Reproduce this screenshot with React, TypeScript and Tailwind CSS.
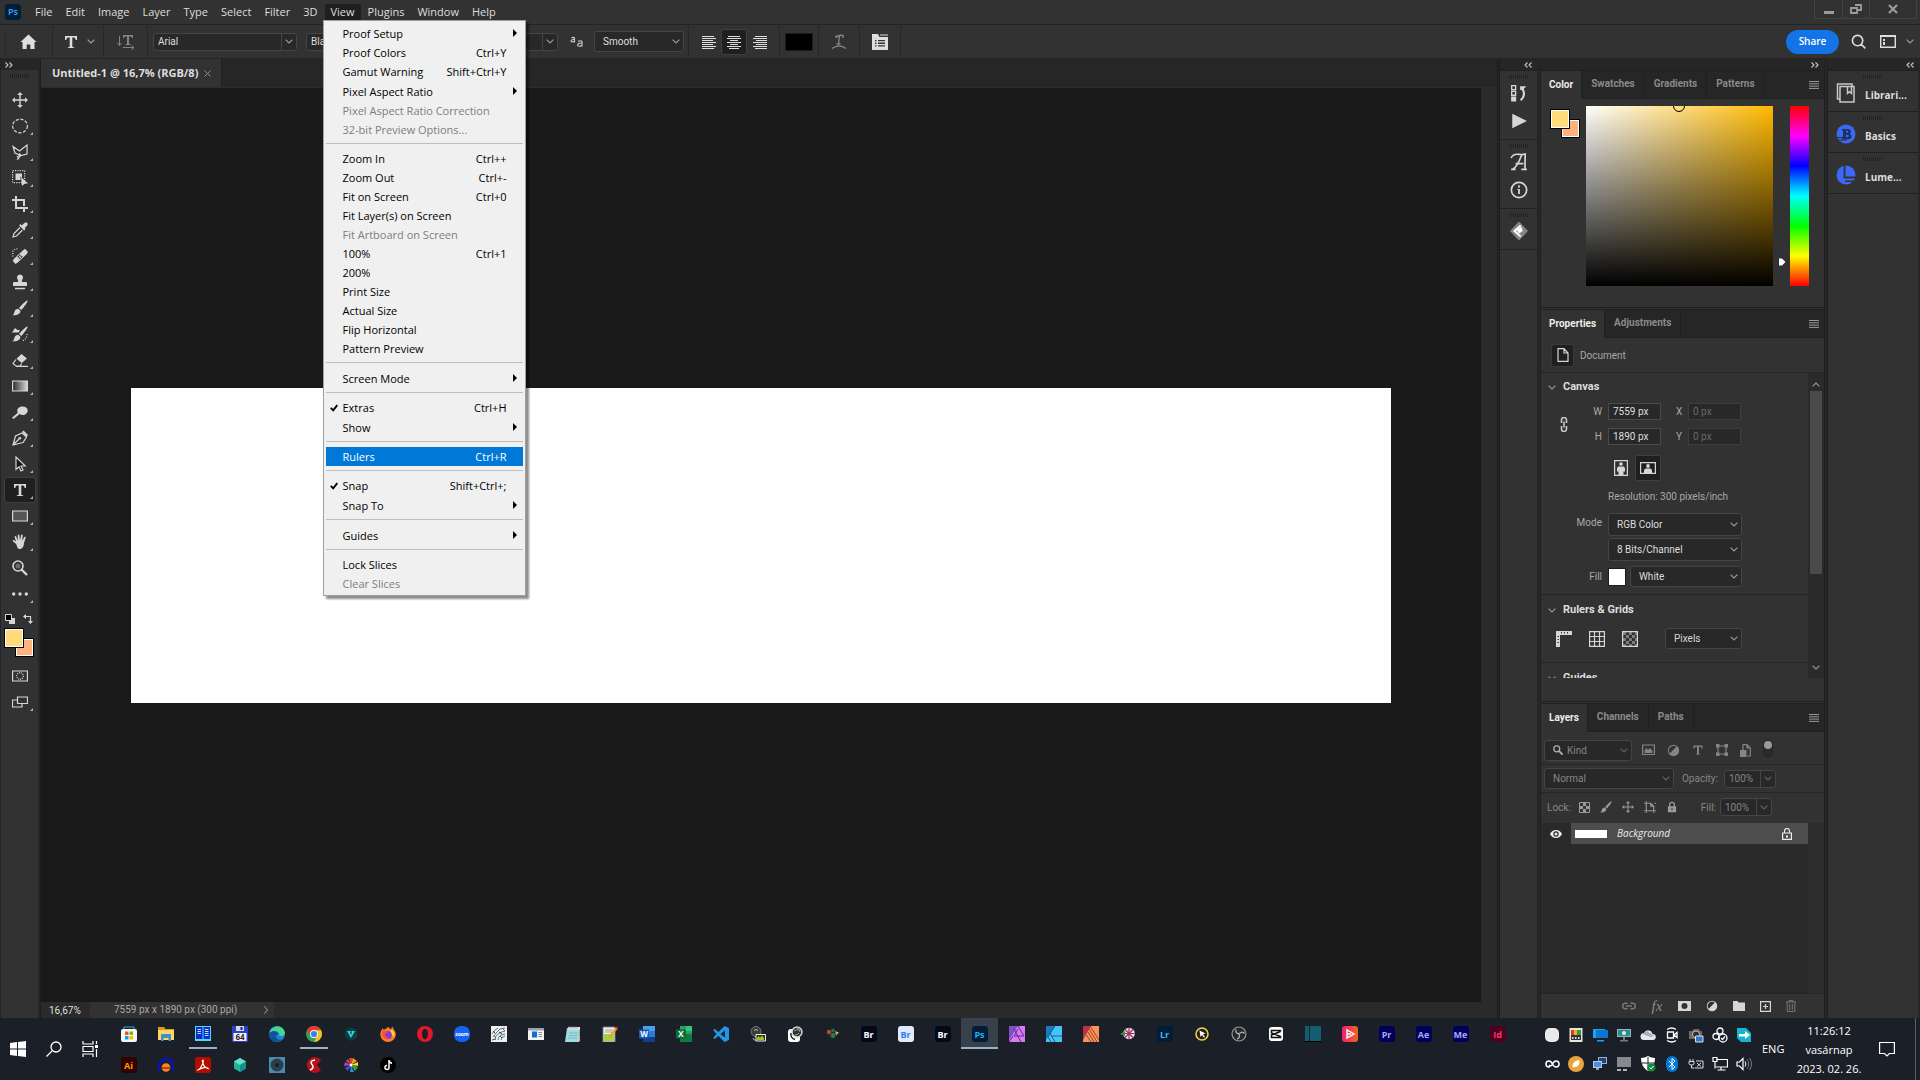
import { ReactNode } from 'react'

type MenuItem = { label: string; keys?: string; sub?: boolean; disabled?: boolean; checked?: boolean; active?: boolean }

const menus = ['File', 'Edit', 'Image', 'Layer', 'Type', 'Select', 'Filter', '3D', 'View', 'Plugins', 'Window', 'Help']

const viewMenu: MenuItem[][] = [
  [
    { label: 'Proof Setup', sub: true },
    { label: 'Proof Colors', keys: 'Ctrl+Y' },
    { label: 'Gamut Warning', keys: 'Shift+Ctrl+Y' },
    { label: 'Pixel Aspect Ratio', sub: true },
    { label: 'Pixel Aspect Ratio Correction', disabled: true },
    { label: '32-bit Preview Options...', disabled: true },
  ],
  [
    { label: 'Zoom In', keys: 'Ctrl++' },
    { label: 'Zoom Out', keys: 'Ctrl+-' },
    { label: 'Fit on Screen', keys: 'Ctrl+0' },
    { label: 'Fit Layer(s) on Screen' },
    { label: 'Fit Artboard on Screen', disabled: true },
    { label: '100%', keys: 'Ctrl+1' },
    { label: '200%' },
    { label: 'Print Size' },
    { label: 'Actual Size' },
    { label: 'Flip Horizontal' },
    { label: 'Pattern Preview' },
  ],
  [{ label: 'Screen Mode', sub: true }],
  [{ label: 'Extras', keys: 'Ctrl+H', checked: true }, { label: 'Show', sub: true }],
  [{ label: 'Rulers', keys: 'Ctrl+R', active: true }],
  [{ label: 'Snap', keys: 'Shift+Ctrl+;', checked: true }, { label: 'Snap To', sub: true }],
  [{ label: 'Guides', sub: true }],
  [{ label: 'Lock Slices' }, { label: 'Clear Slices', disabled: true }],
]

function Svg({ children, className = 'size-4', box = '0 0 16 16' }: { children: ReactNode; className?: string; box?: string }) {
  return (
    <svg viewBox={box} className={`block shrink-0 ${className}`} fill="currentColor" aria-hidden="true">
      {children}
    </svg>
  )
}

function Chevron({ className = 'opacity-65' }: { className?: string }) {
  return (
    <Svg className={`pointer-events-none h-[5px] w-2 ${className}`} box="0 0 8 5">
      <path d="M.6.6 4 4 7.4.6" fill="none" stroke="currentColor" strokeWidth="1.1" />
    </Svg>
  )
}

function DoubleChevron({ left = false, label }: { left?: boolean; label: string }) {
  return (
    <button aria-label={label} className="text-[#c4c4c4]">
      <Svg className="h-[6px] w-2" box="0 0 8 6">
        <path d={left ? 'M3.5.5 1 3l2.5 2.5M7.5.5 5 3l2.5 2.5' : 'M.5.5 3 3 .5 5.5M4.5.5 7 3 4.5 5.5'} fill="none" stroke="currentColor" strokeWidth="1.1" />
      </Svg>
    </button>
  )
}

function Grip() {
  return <div className="h-1 w-5 bg-[repeating-linear-gradient(90deg,#232323_0_1px,transparent_1px_2px)]" />
}

function Divider() {
  return <div className="h-8 w-px shrink-0 bg-[#272727]" />
}

function Picker({ label, value, className = '', icon }: { label: string; value: string; className?: string; icon?: ReactNode }) {
  return (
    <div className={`flex shrink-0 items-center rounded-[3px] border border-[#454545] bg-[#282828] pl-2 pr-[3px] ${className}`}>
      {icon}
      <select aria-label={label} className="min-w-0 flex-1 appearance-none bg-transparent outline-none">
        <option>{value}</option>
      </select>
      <Chevron />
    </div>
  )
}

function Combo({ label, value, className = '' }: { label: string; value: string; className?: string }) {
  return (
    <div className={`flex h-[18px] shrink-0 rounded-[3px] border border-[#454545] bg-[#282828] ${className}`}>
      <input aria-label={label} defaultValue={value} className="w-0 min-w-0 flex-1 bg-transparent pl-1 outline-none" />
      <button aria-label={`${label} options`} className="flex w-[15px] items-center justify-center border-l border-[#454545]">
        <Chevron />
      </button>
    </div>
  )
}

function ViewMenu() {
  return (
    <div role="menu" className="absolute -left-0.5 top-full z-20 w-[203px] border border-[#a0a0a0] bg-[#f0f0f0] p-0.5 text-[11px] text-black shadow-[3px_3px_2px_rgba(0,0,0,0.45)]">
      {viewMenu.map((group, i) => (
        <div key={i} className={i > 0 ? 'mt-1 border-t border-[#bdbdbd] pt-[5px]' : ''}>
          {group.map(item => (
            <button
              key={item.label}
              role="menuitem"
              disabled={item.disabled}
              className={`flex w-full items-center leading-[19px] ${item.sub ? 'h-5' : 'h-[19px]'} ${item.active ? 'bg-[#0078d7] text-white' : ''} ${item.disabled ? 'text-[#7d7d7d]' : ''}`}
            >
              <span className="flex w-[17px] shrink-0 justify-center">
                {item.checked && (
                  <Svg className="h-2 w-2" box="0 0 8 8">
                    <path d="M.8 3.8 3.2 6.3 7.3 1.2" fill="none" stroke="currentColor" strokeWidth="1.900" />
                  </Svg>
                )}
              </span>
              <span className="flex-1 whitespace-nowrap text-left">{item.label}</span>
              <span>{item.keys}</span>
              <span className="flex w-4 shrink-0 justify-center">
                {item.sub && (
                  <Svg className="h-2 w-1" box="0 0 4 8">
                    <path d="M0 0v8l4-4z" />
                  </Svg>
                )}
              </span>
            </button>
          ))}
        </div>
      ))}
    </div>
  )
}

function MenuBar() {
  return (
    <header className="flex h-[25px] items-start border-b border-[#242424] bg-[#323232]">
      <div className="flex h-6 items-center gap-px pl-[5px]">
        <span className="mr-[7px] flex size-4 items-center justify-center rounded-[3px] bg-[#001e36] text-[9px] font-semibold text-[#31a8ff]">Ps</span>
        {menus.map(name => (
          <div key={name} className="relative">
            <button className={`block h-4 rounded-t-[2px] px-1.5 text-[11px] leading-4 ${name === 'View' ? 'bg-[#1f1f1f]' : ''}`}>{name}</button>
            {name === 'View' && <ViewMenu />}
          </div>
        ))}
      </div>
      <div className="ml-auto mr-[3px] flex h-[19px] divide-x divide-[#424242] border border-t-0 border-[#424242] text-[#9c9c9c]">
        <button aria-label="Minimize" className="flex w-7 items-center justify-center pt-1.5">
          <span className="h-[3px] w-2.5 bg-current" />
        </button>
        <button aria-label="Restore" className="flex w-[27px] items-center justify-center">
          <Svg className="h-2.5 w-3" box="0 0 12 10">
            <path d="M5 1h6v5H8M1 4h6v5H1z" fill="none" stroke="currentColor" strokeWidth="1.8" />
          </Svg>
        </button>
        <button aria-label="Close" className="flex w-[46px] items-center justify-center">
          <Svg className="size-2.5" box="0 0 10 10">
            <path d="m1 1 8 8M9 1 1 9" stroke="currentColor" strokeWidth="2.2" />
          </Svg>
        </button>
      </div>
    </header>
  )
}

const letterT = <path d="M2 2h12v4h-1.300c-.3-1.700-.8-2.400-2-2.400H9.300v8.700c0 .7.3.9 1.900 1V14H4.800v-.7c1.600-.1 1.900-.3 1.900-1V3.600H5.300c-1.200 0-1.700.7-2 2.400H2z" />

function AlignIcon({ d }: { d: string }) {
  return (
    <Svg className="size-3.5" box="0 0 14 14">
      <path d={d} stroke="currentColor" />
    </Svg>
  )
}

function OptionsBar() {
  return (
    <div className="flex h-[34px] items-center border-b border-[#242424] bg-[#323232] font-[Roboto,sans-serif] text-[10px] text-[#dedede]">
      <div className="ml-[5px] h-7 w-px bg-[repeating-linear-gradient(#232323_0_1px,transparent_1px_2px)]" />
      <button aria-label="Home" className="ml-3.5">
        <Svg className="h-4 w-[17px]"><path d="M8 .5 16 8h-2v7H9.800v-4.500H6.200V15H2V8H0z" /></Svg>
      </button>
      <div className="ml-[15px]"><Divider /></div>
      <button aria-label="Type tool" className="ml-2.5 flex items-center gap-2">
        <Svg>{letterT}</Svg>
        <Chevron />
      </button>
      <div className="ml-2"><Divider /></div>
      <button aria-label="Toggle text orientation" className="ml-[13px] mr-3 text-[#858585]">
        <Svg className="h-4 w-[18px]" box="0 0 18 16">
          <path d="M6 1h10v3h-1c-.2-1-.6-1.500-1.500-1.500H12v7.500h1.500v1h-5V10H10V2.500H8.500C7.600 2.500 7.200 3 7 4H6z" />
          <path d="M2.500 2v9M.5 9l2 2.500L4.500 9M6 13.500h10.500M14.500 11.500l2.500 2-2.500 2" fill="none" stroke="currentColor" />
        </Svg>
      </button>
      <Divider />
      <Combo label="Font family" value="Arial" className="ml-[5px] w-36" />
      <Combo label="Font style" value="Black" className="ml-[9px] w-28" />
      <Combo label="Font size" value="72 pt" className="ml-8 w-[108px]" />
      <Svg className="ml-3 h-3.5 w-3.5 text-[#cfcfcf]" box="0 0 14 14">
        <path d="M1.500 3q1.500-1.200 3 0v4.500M4.500 4.500q-3-.3-3.500 1.300.3 2 3.500.5M8 6.500q2.200-1.500 4 0v5M12 8q-4-.3-4.500 2 .5 2.300 4.500.5" fill="none" stroke="currentColor" strokeWidth="1.1" />
      </Svg>
      <Picker label="Anti-aliasing" value="Smooth" className="ml-2.5 mr-1 h-[21px] w-[90px]" />
      <Divider />
      <button aria-label="Left align text" className="ml-[13px] mr-[5px]"><AlignIcon d="M0 1.500h12M0 3.500h14M0 5.500h11M0 7.500h14M0 9.500h11M0 11.500h14M0 13.500h12" /></button>
      <button aria-label="Center text" className="flex h-[26px] w-[26px] items-center justify-center rounded-[3px] border border-[#3f3f3f] bg-[#1f1f1f]">
        <AlignIcon d="M1 1.500h12M0 3.500h14M3 5.500h8M0 7.500h14M3 9.500h8M0 11.500h14M2 13.500h10" />
      </button>
      <button aria-label="Right align text" className="ml-1.5 mr-3"><AlignIcon d="M2 1.500h12M0 3.500h14M3 5.500h11M0 7.500h14M3 9.500h11M0 11.500h14M2 13.500h12" /></button>
      <Divider />
      <button aria-label="Text color" className="mx-[5px] h-[18px] w-7 border border-[#1c1c1c] bg-black" />
      <Divider />
      <button aria-label="Warp text" className="mx-3 text-[#858585]">
        <Svg>
          <path d="M5 3.500Q8 .5 12 1.500V4M8.500 1.500l-1 8.500M5.500 10h4M5 1.500V4M1 14.500q7-5 14 0" fill="none" stroke="currentColor" strokeWidth="1.3" />
        </Svg>
      </button>
      <Divider />
      <button aria-label="Toggle character panel" className="mx-3">
        <Svg>
          <path fillRule="evenodd" d="M0 0h6l1.500 3H16v13H0zm3 6v1.300h1.500V6zm3 0v1.300h7V6zM3 8.600v1.300h1.500V8.600zm3 0v1.300h7V8.600zM3 11.200v1.300h1.500v-1.300zm3 0v1.300h7v-1.300z" />
          <path d="M8 0h8v2H8z" opacity=".5" />
        </Svg>
      </button>
      <Divider />
      <button className="ml-auto h-6 w-[53px] rounded-full bg-[#1473e6] font-['Open_Sans',sans-serif] font-semibold text-white">Share</button>
      <button aria-label="Search" className="ml-3">
        <Svg className="size-[15px]"><path d="m10.500 10.500 4.800 4.800M12.500 7A5.500 5.500 0 1 1 1.500 7a5.500 5.500 0 0 1 11 0z" fill="none" stroke="currentColor" strokeWidth="1.7" /></Svg>
      </button>
      <button aria-label="Workspace" className="ml-3.5 mr-1.5 flex items-center">
        <Svg className="h-[13px] w-4" box="0 0 16 13">
          <path d="M.7.7h14.600v11.600H.7z" fill="none" stroke="currentColor" strokeWidth="1.4" />
          <path d="M.7 0h14.600v2H.7zM3 4h2v2H3zm0 3h2v3H3z" />
        </Svg>
        <Chevron className="ml-2.5 opacity-65" />
      </button>
    </div>
  )
}

const line = { fill: 'none', stroke: 'currentColor', strokeWidth: 1.2 }
const moveIcon = <path d="M8 0l2.800 3H8.700v4.300H13V5.200L16 8l-3 2.800V8.700H8.700V13h2.100L8 16l-2.800-3h2.100V8.700H3v2.100L0 8l3-2.800v2.100h4.300V3H5.200z" />
const brushIcon = <path d="M15.500.5c.8.7-3.500 6.800-6.300 9.500L7 8C9.300 5 14.700-.2 15.500.5zM6.200 8.700l2.200 2.100c.2 3-3 5-8.200 4.400 2.200-1 1.700-2.200 2.500-4.200.7-1.500 2.200-2.300 3.500-2.300z" />

const tools: [string, ReactNode][] = [
  ['Move', moveIcon],
  ['Elliptical Marquee', <ellipse cx="8" cy="8" rx="7.4" ry="6.8" {...line} strokeDasharray="3.2 1.6" />],
  ['Polygonal Lasso', <path d="M1 2.500 7.500 7 15 1v9l-6 1.500L3 9zM7 9.500a1.800 1.800 0 1 1-2 2.500M7 11q1 3-2 4.500" {...line} />],
  ['Object Selection', <><path d="M.6.6h12v12h-12z" {...line} strokeDasharray="1.2 1.2" /><path d="M3.500 3.500h6.500v4L8.500 6.500V10h-5zM9 7l7 6.500-3.500.3L10 16z" /></>],
  ['Crop', <path d="M4 0v12h12M0 4h3M5 4h7v6M12 13v3" fill="none" stroke="currentColor" strokeWidth="2" />],
  ['Eyedropper', <><path d="M10 3.500c2-3 4-3.500 5.200-2.600 1 1 .3 3-2.500 5.200l.8 1-1.300 1.300-5-5L8.500 2z" /><path d="M8 5.500 2 11.500 1 15l3.500-1 6-6" {...line} /></>],
  ['Spot Healing', <><path fillRule="evenodd" d="M11 2.200 13 .8 16 4l-1.200 2-9 8.500L3.500 16 .8 13l1-2zM8.300 5.800 5.300 8.700l2.500 2.600 3-2.900z" /><path d="M6.300 7.300 9 10M7.800 6l2.500 2.500M9.500 7l-3 3" stroke="currentColor" /><path d="M.8 8.500V3.500q2.500-4 6-2" {...line} strokeDasharray="1 1.4" /></>],
  ['Clone Stamp', <path d="M8 .5a3 3 0 0 1 2.500 4.700C9.500 6.500 9.700 8 10.500 8H14q1 0 1 1v3H1V9q0-1 1-1h3.500C6.300 8 6.500 6.500 5.500 5.200A3 3 0 0 1 8 .5zM3 13.800h10v1.400H3z" />],
  ['Brush', brushIcon],
  ['History Brush', <>{brushIcon}<path d="M0 6.500 3 2l2.500 2H8L6.500 6.500z" /><path d="M15 8q0 5-5 7" {...line} strokeDasharray="1 1.4" /></>],
  ['Eraser', <><path d="M9.500 2 15 6.500 9.800 11 4.500 6.800z" /><path d="M4 7.500 1 11.500 4 14h4L9.800 11.500M4 14.400h12" {...line} /></>],
  ['Gradient', <><defs><linearGradient id="tool-gradient"><stop stopColor="#2a2a2a" /><stop offset="1" stopColor="#d8d8d8" /></linearGradient></defs><path d="M.6 3h14.800v10H.6z" fill="url(#tool-gradient)" stroke="currentColor" strokeWidth="1.2" /></>],
  ['Dodge', <path d="M10.500 2.500c3 0 5.200 1.500 5.200 4s-2.200 4.500-5 4.500c-1.200 0-2.200-.4-3-1L1.500 15 0 13.800l5.800-5C4 5 7 2.500 10.500 2.500z" />],
  ['Pen', <><path d="M1 15 3.500 6 10 3l4.500 4L11 12.500zM1 15l6-6" {...line} /><circle cx="7.8" cy="8.3" r="1.3" /><path d="m10 2 1.500-1.500L16 5l-1.500 2z" /></>],
  ['Path Selection', <path d="M4 1v12.500l3-2.700 2 4.200 2-1-2-4h4.200z" fill="#151515" stroke="currentColor" strokeWidth="1.2" />],
  ['Horizontal Type', letterT],
  ['Rectangle', <path d="M.6 3h14.800v10H.6z" fill="#565656" stroke="currentColor" strokeWidth="1.2" />],
  ['Hand', <path d="M4.200 10 1 7.500c-.8-.8.2-1.800 1.200-1.300L4 7.500 2.700 3.200c-.3-1.300 1.200-1.500 1.600-.4l1.500 3.900L5.700 1.400c0-1.200 1.600-1.200 1.700 0L8 6.500 9 1.300c.3-1.100 1.800-.8 1.700.3l-.5 5.100 1.900-3.400c.6-1 1.900-.3 1.500.7L12 9c-.2 3.500-1.500 6-4.500 6-2 0-2.500-2.500-3.300-5z" />],
  ['Zoom', <><circle cx="6" cy="6" r="5" {...line} strokeWidth="1.6" /><circle cx="6" cy="6" r="2.5" opacity=".35" /><path d="m9.500 9.500 5.500 5.500" stroke="currentColor" strokeWidth="2.4" /></>],
  ['Edit Toolbar', <path d="M0 8a1.700 1.700 0 1 0 3.400 0A1.700 1.700 0 1 0 0 8zm6.300 0a1.700 1.700 0 1 0 3.400 0 1.700 1.700 0 1 0-3.400 0zm6.300 0A1.700 1.700 0 1 0 16 8a1.700 1.700 0 1 0-3.400 0z" />],
]

function Tool({ name, icon, corner = true }: { name: string; icon: ReactNode; corner?: boolean }) {
  return (
    <button
      aria-label={name}
      className={`flex h-[26px] w-8 items-center rounded-[3px] border pl-[7px] ${name === 'Horizontal Type' ? 'border-[#3f3f3f] bg-[#1f1f1f]' : 'border-transparent'}`}
    >
      <Svg>{icon}</Svg>
      {corner && <Svg className="-mb-3.5 ml-0.5 size-[3px] text-[#b0b0b0]" box="0 0 3 3"><path d="M3 0v3H0z" /></Svg>}
    </button>
  )
}

function Swatches({ className = '' }: { className?: string }) {
  return (
    <div className={`grid ${className}`}>
      <button aria-label="Background color" className="col-start-1 row-start-1 ml-[11px] mt-2.5 size-[19px] border border-black bg-[#ffb27c] outline-1 -outline-offset-2 outline-white" />
      <button aria-label="Foreground color" className="z-10 col-start-1 row-start-1 size-5 border border-black bg-[#ffdb7c] outline-1 -outline-offset-2 outline-white" />
    </div>
  )
}

function Toolbar() {
  return (
    <aside className="flex w-[38px] shrink-0 flex-col border-l border-[#232323] bg-[#323232] text-[#d6d6d6]">
      <div className="flex h-[11px] items-center bg-[#262626] pl-1"><DoubleChevron label="Expand tools" /></div>
      <div className="flex justify-center pb-[9px] pt-1"><Grip /></div>
      <div className="flex flex-col pl-[3px]">
        {tools.map(([name, icon]) => (
          <Tool key={name} name={name} icon={icon} corner={name !== 'Move' && name !== 'Zoom'} />
        ))}
      </div>
      <div className="flex items-center gap-2 pb-1 pl-1 pt-[7px]">
        <button aria-label="Default colors">
          <Svg className="size-2.5" box="0 0 10 10"><path d="M4 4h6v6H4z" /><path d="M.5.5h6v6h-6z" fill="#000" stroke="currentColor" /></Svg>
        </button>
        <button aria-label="Switch colors">
          <Svg className="size-2.5" box="0 0 10 10"><path d="M2 2.500h5.500V8" fill="none" stroke="currentColor" strokeWidth="1.2" /><path d="M0 2.500 3 0v5zM7.500 10 5 7h5z" /></Svg>
        </button>
      </div>
      <Swatches className="ml-[3px] w-[30px]" />
      <div className="mt-1.5 pl-[3px]">
        <Tool name="Quick Mask" corner={false} icon={<><path d="M.6 3h14.800v10H.6z" {...line} /><circle cx="8" cy="8" r="3.3" {...line} strokeDasharray="1 1" /></>} />
        <Tool name="Screen Mode" icon={<path d="M5.500 3h10v6.500h-10zM5.500 6h-5v7h9.500V9.500" {...line} />} />
      </div>
    </aside>
  )
}

function DocumentArea() {
  return (
    <main className="flex min-w-0 flex-1 flex-col">
      <div className="flex h-[29px] border-b border-[#2c2c2c] bg-[#262626]">
        <div className="flex w-[181px] items-center border-r border-[#202020] bg-[#323232] pl-[11px] text-[11px] font-bold text-[#dedede]">
          <span className="flex-1 whitespace-nowrap">Untitled-1 @ 16,7% (RGB/8)</span>
          <button aria-label="Close document" className="mr-2.5 text-[#8f8f8f]">
            <Svg className="size-[7px]" box="0 0 7 7"><path d="m.5.5 6 6M6.500.5l-6 6" stroke="currentColor" /></Svg>
          </button>
        </div>
      </div>
      <div className="flex flex-1">
        <div className="flex flex-1 items-center justify-center bg-[#191919]">
          <div className="aspect-[4/1] w-7/8 bg-white" />
        </div>
        <div className="w-4 bg-[#2a2a2a]" />
      </div>
      <div className="flex h-4 bg-[#2a2a2a] font-[Roboto,sans-serif] text-[10px] leading-[18px] text-[#a8a8a8]">
        <span className="w-[49px] pl-2 text-[#dedede]">16,67%</span>
        <span className="flex w-[184px] items-center bg-[#323232] pl-6 pr-1.5">
          <span className="flex-1">7559 px x 1890 px (300 ppi)</span>
          <button aria-label="Status options">
            <Svg className="h-2 w-1" box="0 0 4 8"><path d="M.5.5 3.500 4 .5 7.500" fill="none" stroke="currentColor" /></Svg>
          </button>
        </span>
      </div>
    </main>
  )
}

const adjustIcon = <path fillRule="evenodd" d="M8 1a7 7 0 1 1 0 14A7 7 0 0 1 8 1zM3.500 11.500l8-8A5.700 5.700 0 0 0 3.500 11.500z" />
const lockIcon = <path fillRule="evenodd" d="M4 7V5a4 4 0 0 1 8 0v2h1.500v8h-11V7zm1.700 0h4.600V5a2.300 2.300 0 0 0-4.600 0zM7 10v2h2v-2z" />

function DockButton({ label, children }: { label: string; children: ReactNode }) {
  return <button aria-label={label} className="flex h-7 w-full items-center justify-center"><Svg className="size-[18px]">{children}</Svg></button>
}

function IconDock() {
  return (
    <aside className="flex w-[38px] shrink-0 flex-col border-r border-[#232323] bg-[#323232] text-[#d6d6d6]">
      <div className="flex h-3 items-center justify-end border-b border-[#202020] bg-[#262626] pr-[5px]"><DoubleChevron left label="Expand dock" /></div>
      <div className="flex h-[69px] flex-col items-center border-b border-[#232323] pt-1">
        <Grip />
        <DockButton label="History"><path d="M1.500 1.500h3.500v3.500H1.500zM1.500 6.500h3.500V10H1.500z" {...line} /><path d="M1 11h4.500v4.500H1zM9 2h5.500L11 5.800 9 5z" /><path d="M9.500 14.500Q14.500 10 11 4" {...line} strokeWidth="1.8" /></DockButton>
        <DockButton label="Actions"><path d="M2 1.500 15 8 2 14.500z" /></DockButton>
      </div>
      <div className="flex h-[69px] flex-col items-center border-b border-[#232323] pt-1">
        <Grip />
        <DockButton label="Glyphs"><path d="M1 4.500Q2.500.5 8 1.200q3.500.4 5.500-.2L13.300 14.300M10.500 1.500Q6 13 2.500 14.300M5 9.500h7M1 14.500h4M10 14.500h5" {...line} strokeWidth="1.5" /></DockButton>
        <DockButton label="Info"><circle cx="8" cy="8" r="6.8" {...line} strokeWidth="1.5" /><path d="M7.100 4h1.800v1.700H7.100zM6.500 7h2.300v4.500H7.200V8h-.7z" /></DockButton>
      </div>
      <div className="flex h-[41px] flex-col items-center border-b border-[#232323] pt-1">
        <Grip />
        <DockButton label="Fonts"><path d="m8-.5 8 8.500-8 8.500L0 8z" fill="#858585" /><path d="M9.500 3 4 8l5.500 5M6.500 8l4-3M7.500 9.500 11 7" fill="none" stroke="#fff" strokeWidth="1.8" /></DockButton>
      </div>
    </aside>
  )
}

function PanelTabs({ tabs }: { tabs: string[] }) {
  return (
    <div role="tablist" className="flex h-7 border-b border-[#202020] bg-[#262626]">
      {tabs.map((tab, i) => (
        <button
          key={tab}
          role="tab"
          aria-selected={i === 0}
          className={`border-r border-[#202020] pb-0.5 text-[10px] font-bold ${i === 0 ? '-mb-px bg-[#323232] px-2 text-[#ececec]' : 'px-[9px] text-[#8a8a8a]'}`}
        >
          {tab}
        </button>
      ))}
      <button aria-label="Panel menu" className="ml-auto mr-[5px] text-[#9a9a9a]">
        <Svg className="h-2 w-2.5" box="0 0 10 8"><path d="M0 .5h10M0 2.800h10M0 5.100h10M0 7.400h10" stroke="currentColor" /></Svg>
      </button>
    </div>
  )
}

function ColorPanel() {
  return (
    <section className="h-[237px] border-b border-[#202020]">
      <PanelTabs tabs={['Color', 'Swatches', 'Gradients', 'Patterns']} />
      <div className="flex pl-[9px] pt-[7px]">
        <Swatches className="mr-1.5 mt-[3px] w-[30px] self-start" />
        <div className="relative h-[180px] w-[187px] overflow-hidden bg-[linear-gradient(to_top,#000,transparent),linear-gradient(to_right,#fff,#ffb900)]">
          <span className="absolute -top-1.5 left-[87px] size-3 rounded-full border border-black" />
        </div>
        <div className="flex w-[17px] items-end justify-center pb-5">
          <Svg className="size-2 text-white" box="0 0 8 8"><path d="M1 .5h3L7.500 4 4 7.500H1z" /></Svg>
        </div>
        <div className="h-[180px] w-[19px] bg-[linear-gradient(#f00,#f0f,#00f,#0ff,#0f0,#ff0,#f00)]" />
      </div>
    </section>
  )
}

function SizeField({ label, value, disabled, labelClass }: { label: string; value: string; disabled?: boolean; labelClass: string }) {
  return (
    <label className="flex items-center gap-1.5">
      <span className={`text-right ${labelClass}`}>{label}</span>
      <input
        defaultValue={value}
        disabled={disabled}
        className={`h-[17px] w-[53px] border bg-[#282828] pl-1 outline-none ${disabled ? 'border-[#3d3d3d] text-[#6a6a6a]' : 'border-[#4a4a4a] text-[#dedede]'}`}
      />
    </label>
  )
}

function Heading({ children }: { children: ReactNode }) {
  return (
    <h3 className="flex items-center gap-1.5 pl-1.5 text-[11px] font-bold leading-4 text-[#dedede]">
      <Chevron className="w-2.5 text-[#9a9a9a]" />
      {children}
    </h3>
  )
}

function PropertiesPanel() {
  return (
    <section className="mt-px h-[393px] border-y border-[#202020]">
      <PanelTabs tabs={['Properties', 'Adjustments']} />
      <div className="flex h-[35px] items-center gap-1.5 border-b border-[#262626] pl-2.5">
        <span className="flex size-[23px] items-center justify-center rounded-[3px] border border-[#3a3a3a] bg-[#1f1f1f] text-[#d6d6d6]">
          <Svg className="h-3.5 w-3" box="0 0 12 14"><path d="M1 .7h6L11 5v8.300H1zM7 .7V5h4" {...line} /></Svg>
        </span>
        Document
      </div>
      <div className="flex h-[305px]">
        <div className="min-w-0 flex-1 overflow-hidden">
          <div className="h-[222px] border-b border-[#262626] pt-1.5">
            <Heading>Canvas</Heading>
            <div className="mt-2 flex">
              <button aria-label="Link width and height" className="flex w-[46px] items-center justify-center text-[#c6c6c6]">
                <Svg className="h-[15px] w-2" box="0 0 8 15"><path d="M1.500 6V3a2.500 2.500 0 0 1 5 0v3M1.500 9v3a2.500 2.500 0 0 0 5 0V9M4 4.500v6" fill="none" stroke="currentColor" strokeWidth="1.6" /></Svg>
              </button>
              <div className="grid grid-cols-[auto_auto] gap-x-[15px] gap-y-2">
                <SizeField label="W" value="7559 px" labelClass="w-[15px]" />
                <SizeField label="X" value="0 px" disabled labelClass="w-1.5" />
                <SizeField label="H" value="1890 px" labelClass="w-[15px]" />
                <SizeField label="Y" value="0 px" disabled labelClass="w-1.5" />
              </div>
            </div>
            <div className="ml-[73px] mt-2.5 flex items-center gap-[7px] text-[#d6d6d6]">
              <button aria-label="Portrait"><Svg className="h-4 w-3.5" box="0 0 14 16"><path d="M.6.6h12.800v14.800H.6z" {...line} /><circle cx="7" cy="4" r="1.8" /><path d="M4 6.500h6l1 2v3H9.500V15h-5v-3.500H3v-3z" /></Svg></button>
              <button aria-label="Landscape" className="flex size-[26px] items-center justify-center rounded-[3px] border border-[#3f3f3f] bg-[#1f1f1f]">
                <Svg className="h-3 w-4" box="0 0 16 12"><path d="M.6.6h14.800v10.800H.6z" {...line} /><circle cx="8" cy="4" r="1.9" /><path d="M4 11V8.500Q4 6.500 6 6.500h4q2 0 2 2V11z" /></Svg>
              </button>
            </div>
            <p className="ml-[67px] mt-2 leading-4">Resolution: 300 pixels/inch</p>
            <div className="mt-2 flex">
              <span className="w-[61px] pt-0.5 text-right leading-4">Mode</span>
              <div className="ml-1.5 flex flex-col gap-0.5 text-[#dedede]">
                <Picker label="Mode" value="RGB Color" className="h-[23px] w-[134px]" />
                <Picker label="Bit depth" value="8 Bits/Channel" className="h-[23px] w-[134px]" />
              </div>
            </div>
            <div className="mt-[5px] flex items-center text-[#dedede]">
              <span className="w-[61px] text-right text-[#a8a8a8]">Fill</span>
              <button aria-label="Fill color" className="ml-1.5 mr-1 size-[18px] border border-[#1c1c1c] bg-white" />
              <Picker label="Fill" value="White" className="h-[21px] w-[112px]" />
            </div>
          </div>
          <div className="h-[68px] border-b border-[#262626] pt-[7px]">
            <Heading>Rulers &amp; Grids</Heading>
            <div className="mt-2.5 flex items-center gap-[17px] pl-[15px] text-[#d6d6d6]">
              <button aria-label="Rulers"><Svg><path fillRule="evenodd" d="M0 0h16v4H4v12H0zm5 1v1.500h1V1zm3 0v1.500h1V1zm3 0v1.500h1V1zM1.500 5v1H3V5zm0 3v1H3V8zm0 3v1H3v-1z" /></Svg></button>
              <button aria-label="Grid"><Svg><path d="M.6.6h14.800v14.800H.6zM5.500 0v16M10.500 0v16M0 5.500h16M0 10.500h16" {...line} /></Svg></button>
              <button aria-label="Transparency"><Svg><path d="M.6.6h14.800v14.800H.6z" {...line} /><path d="M1 1h3v3H1zM7 1h3v3H7zM4 4h3v3H4zM10 4h3v3h-3zM1 7h3v3H1zM7 7h3v3H7zM4 10h3v3H4zM10 10h3v3h-3zM13 1h2v3h-2zM13 7h2v3h-2zM1 13h3v2H1zM7 13h3v2H7zM13 13h2v2h-2z" opacity=".45" /></Svg></button>
              <Picker label="Units" value="Pixels" className="ml-2.5 h-[21px] w-[77px]" />
            </div>
          </div>
          <div className="pt-[7px]"><Heading>Guides</Heading></div>
        </div>
        <div className="flex w-4 flex-col items-center bg-[#2a2a2a] pb-2 pt-[9px]">
          <Chevron className="rotate-180 text-[#9a9a9a]" />
          <div className="mt-1 h-[183px] w-3 bg-[#4a4a4a]" />
          <Chevron className="mt-auto text-[#9a9a9a]" />
        </div>
      </div>
    </section>
  )
}

function LayersPanel() {
  return (
    <section className="mt-px flex flex-1 flex-col border-t border-[#202020] text-[#858585]">
      <PanelTabs tabs={['Layers', 'Channels', 'Paths']} />
      <div className="flex h-[33px] items-center border-b border-[#262626] pl-[3px] pt-1">
        <Picker label="Filter type" value="Kind" className="h-[21px] w-[88px]" icon={<Svg className="mr-1 size-2.5 text-[#b0b0b0]"><circle cx="6" cy="6" r="4.8" fill="none" stroke="currentColor" strokeWidth="2" /><path d="m9.500 9.500 6 6" stroke="currentColor" strokeWidth="3" /></Svg>} />
        <div className="flex items-center gap-3 pl-2.5">
          <button aria-label="Pixel layers"><Svg className="h-3 w-[13px]" box="0 0 13 12"><path d="M.6 1h11.800v9.500H.6z" {...line} /><path d="M2.500 9V6.500L4.500 4 6 6l2-2 2.500 3v2z" /></Svg></button>
          <button aria-label="Adjustment layers"><Svg className="size-[13px]">{adjustIcon}</Svg></button>
          <button aria-label="Type layers"><Svg className="size-3">{letterT}</Svg></button>
          <button aria-label="Shape layers"><Svg className="size-3" box="0 0 12 12"><path d="M2 2h8v8H2z" {...line} /><path d="M0 0h3.500v3.500H0zM8.500 0H12v3.500H8.500zM0 8.500h3.500V12H0zM8.500 8.500H12V12H8.500z" /></Svg></button>
          <button aria-label="Smart objects"><Svg className="h-[13px] w-[11px]" box="0 0 11 13"><path d="M3 7V.7h4L10.300 4v8H7M7 .7V4h3.300" {...line} /><path d="M0 6h6.500v7H0z" /></Svg></button>
        </div>
        <button aria-label="Toggle layer filter" className="mb-0.5 ml-3 flex h-[18px] w-2.5 rounded-full border border-[#262626] bg-[#2a2a2a]">
          <span className="size-2 rounded-full bg-[#9a9a9a]" />
        </button>
      </div>
      <div className="flex h-7 items-center border-b border-[#262626] pl-[3px]">
        <Picker label="Blend mode" value="Normal" className="h-[21px] w-[130px]" />
        <span className="w-[44px] text-right">Opacity:</span>
        <Combo label="Opacity" value="100%" className="ml-1.5 w-[52px]" />
      </div>
      <div className="flex h-[30px] items-center pb-0.5 pl-1.5">
        <span className="w-8">Lock:</span>
        <div className="flex items-center gap-2.5 text-[#9a9a9a]">
          <button aria-label="Lock transparent pixels"><Svg className="size-[11px]" box="0 0 11 11"><path d="M.5.5h10v10H.5z" fill="none" stroke="currentColor" /><path d="M4 1h3v3H4zM1 4h3v3H1zM7 4h3v3H7zM4 7h3v3H4z" /></Svg></button>
          <button aria-label="Lock image pixels"><Svg className="size-3">{brushIcon}</Svg></button>
          <button aria-label="Lock position"><Svg className="size-3">{moveIcon}</Svg></button>
          <button aria-label="Lock artboard"><Svg className="size-3">
            <path d="M3 0v2M0 3h2M3 14v2M14 3h2M13 14v2M0 13h2M14 13h2M3 3h6l4 4v6H3zM9 3v4h4" {...line} strokeWidth="1.5" /></Svg></button>
          <button aria-label="Lock all"><Svg className="size-3">{lockIcon}</Svg></button>
        </div>
        <span className="ml-auto mr-1">Fill:</span>
        <Combo label="Fill opacity" value="100%" className="mr-[52px] w-[52px]" />
      </div>
      <div className="flex flex-1 bg-[#2a2a2a]">
        <div className="flex-1">
          <div className="flex h-[21px] items-stretch text-[#ececec]">
            <button aria-label="Toggle layer visibility" className="flex w-[30px] items-center justify-center">
              <Svg className="h-2 w-3" box="0 0 12 8"><path fillRule="evenodd" d="M6 0c3 0 5 2 6 4-1 2-3 4-6 4S1 6 0 4c1-2 3-4 6-4zm0 1.300a2.700 2.700 0 1 0 0 5.400 2.700 2.700 0 0 0 0-5.400z" /><circle cx="6" cy="4" r="1.5" /></Svg>
            </button>
            <div className="flex flex-1 items-center bg-[#4d4d4d] pl-1 pr-4">
              <span className="mr-2.5 h-2 w-8 bg-white" />
              <span className="flex-1 font-['Open_Sans',sans-serif] italic">Background</span>
              <Svg className="h-3 w-2.5" box="0 0 10 12"><path d="M.6 5h8.800v6.400H.6zM2.500 5V3a2.500 2.500 0 0 1 5 0v2" {...line} /><path d="M4 7.500h2v2H4z" /></Svg>
            </div>
          </div>
        </div>
        <div className="w-4 bg-[#2d2d2d]" />
      </div>
      <div className="flex h-[25px] items-center justify-end gap-[15px] border-t border-[#262626] pr-7 text-[#d6d6d6]">
        <button aria-label="Link layers" className="text-[#7a7a7a]"><Svg className="h-2 w-3.5" box="0 0 14 8"><path d="M5.500 6.800H3.500a2.800 2.800 0 0 1 0-5.600h2M8.500 6.800h2a2.800 2.800 0 0 0 0-5.600h-2M4 4h6" {...line} strokeWidth="1.4" /></Svg></button>
        <button aria-label="Layer style" className="w-3 font-['Liberation_Serif',serif] text-[15px] italic leading-none text-[#8a8a8a]">fx</button>
        <button aria-label="Add mask"><Svg className="h-2.5 w-[13px]" box="0 0 13 10"><path fillRule="evenodd" d="M0 0h13v10H0zm6.500 2a3 3 0 1 0 0 6 3 3 0 0 0 0-6z" /></Svg></button>
        <button aria-label="Adjustment layer"><Svg className="size-3">{adjustIcon}</Svg></button>
        <button aria-label="New group"><Svg className="h-2.5 w-3" box="0 0 12 10"><path d="M0 0h4.500l1 1.500H12V10H0z" /></Svg></button>
        <button aria-label="New layer"><Svg className="size-[11px]" box="0 0 11 11"><path d="M.6.6h9.800v9.800H.6zM5.500 3v5M3 5.500h5" {...line} /></Svg></button>
        <button aria-label="Delete layer" className="text-[#7a7a7a]"><Svg className="h-3 w-2.5" box="0 0 10 12"><path d="M0 2h10M3 2V.6h4V2M1.200 2.500v8.900h7.600V2.500M3.700 4v6M6.300 4v6" {...line} strokeWidth="1" /></Svg></button>
      </div>
    </section>
  )
}

function SidePanels() {
  return (
    <aside className="ml-0.5 flex w-[285px] shrink-0 flex-col border-x border-[#202020] bg-[#323232] font-[Roboto,sans-serif] text-[10px] text-[#a8a8a8]">
      <div className="flex h-3 shrink-0 items-center justify-end border-b border-[#202020] bg-[#262626] pr-[5px]"><DoubleChevron label="Collapse panels" /></div>
      <ColorPanel />
      <PropertiesPanel />
      <LayersPanel />
    </aside>
  )
}

const plugins: [string, ReactNode][] = [
  ['Librari...', <path d="M4 3.500h14V19H4zM4 16H1.500V1H16v2.500M11.500 4v6.500l2-1.700 2 1.700V4" fill="none" stroke="#c8c8c8" strokeWidth="1.5" />],
  ['Basics', <><circle cx="10" cy="10" r="9.5" fill="#3b68f5" /><path d="M0 13.500h9M2 16h9" stroke="#323232" strokeWidth="1.2" /><path d="M6 5h6q3 0 3 2.500 0 1.700-1.500 2.300 2 .5 2 2.500 0 3-3.500 3H6v-1.500h1V6.500H6zm4 1.800v2h1.200q1 0 1-1t-1-1zm0 3.900v2.500h1.500q1.200 0 1.200-1.200t-1.200-1.300z" fill="#1f2f66" fillRule="evenodd" /></>],
  ['Lume...', <><circle cx="10" cy="10" r="9.5" fill="#3b68f5" /><path d="M8.500 0v12.500H20" fill="none" stroke="#323232" strokeWidth="1.8" /><path d="M9 15.500h11v1.500H9z" fill="#323232" /></>],
]

function PluginDock() {
  return (
    <aside className="ml-0.5 mr-0.5 flex w-[91px] shrink-0 flex-col border-l border-[#202020] bg-[#323232]">
      <div className="flex h-3 items-center justify-end border-b border-[#202020] bg-[#262626] pr-1"><DoubleChevron left label="Expand plugins" /></div>
      {plugins.map(([name, icon]) => (
        <div key={name} className="flex h-[41px] flex-col items-center border-b border-[#202020] pt-1">
          <Grip />
          <button className="flex w-full flex-1 items-center gap-2 pl-[7px] text-left text-[10px] font-bold text-[#dedede]">
            <Svg className="mb-1 size-[22px]" box="-1 -1 22 22">{icon}</Svg>
            {name}
          </button>
        </div>
      ))}
    </aside>
  )
}

function Badge({ className, children }: { className: string; children: ReactNode }) {
  return <span className={`flex size-4 items-center justify-center rounded-[3px] text-[9px] font-bold leading-none ${className}`}>{children}</span>
}

type App = [string, ReactNode, ('open' | 'active')?]

const pinned: App[] = [
  ['Store', <Svg><rect y="3" width="16" height="13" rx="2" fill="#f6f6f6" /><path d="M3 3V1h10v2" fill="none" stroke="#2fa8dc" /><path d="M4 5.500h3.500V9H4z" fill="#f25022" /><path d="M8.500 5.500H12V9H8.500z" fill="#7fba00" /><path d="M4 10h3.500v3.500H4z" fill="#00a4ef" /><path d="M8.500 10H12v3.500H8.500z" fill="#ffb900" /></Svg>],
  ['File Explorer', <Svg><path d="M0 1h6l1.500 2H16v4H0z" fill="#d9a01c" /><path d="M0 4h16v10H0z" fill="#ffd75e" /><path d="M3 15V8h10v7h-2.500v-3h-5v3z" fill="#3f8fd2" /></Svg>],
  ['Commander', <Svg><path d="M0 0h16v15H0z" fill="#4fd8ff" /><path d="M1 1h6.500v12H1zM8.500 1H15v12H8.500z" fill="#0a2fc9" /><path d="M2.500 3.500H6M2.500 5.500H6M2.500 7.500H6M10 3.500h3.500M10 5.500h3.500M10 7.500h3.500M10 9.500h3.500" stroke="#b5e4ff" /></Svg>, 'open'],
  ['Total Commander 64', <Svg><path d="M0 0h16v16H0z" fill="#2c3fc4" /><path d="M4 0h8v5H4z" fill="#d3dcf3" /><path d="M8.500 1h2v3h-2z" fill="#17237e" /><path d="M1.500 7h13v8h-13z" fill="#f3f3f3" /><text x="8" y="14" fontSize="8" fontWeight="bold" textAnchor="middle" fill="#222">64</text></Svg>],
  ['Edge', <Svg><circle cx="8" cy="8" r="8" fill="#1b86d3" /><path d="M.5 7C2-1 14-2 15.900 6.500c.4 3-3.500 4.500-5.700 3C11 6 6 3 .5 7z" fill="#4bd48b" /><path d="M.2 7C4 3.500 9 5.500 9.500 8.500 7 8 6 10.500 8 12.500c2 2 4.500 1.500 6.500.2C9 19-1 16 .2 7z" fill="#11529b" /></Svg>],
  ['Chrome', <Svg><circle cx="8" cy="8" r="8" fill="#31a350" /><path d="M1 4.200A8 8 0 0 1 15 4.200H8L5 10z" fill="#e33b2e" /><path d="M15 4.200A8 8 0 0 1 8 16l4-7-1.500-4.800z" fill="#fbc116" /><circle cx="8" cy="8" r="4" fill="#fff" /><circle cx="8" cy="8" r="3.1" fill="#3b7ded" /></Svg>, 'open'],
  ['Vivaldi', <Svg><path d="m8 1 6 3.500v7L8 15l-6-3.500v-7z" fill="#0a3f47" /><path d="M4 5h8l-4 7z" fill="#35d3c7" /><path d="M7 5.500h2L8 9z" fill="#0a3f47" /></Svg>],
  ['Firefox', <Svg><path d="M8 1c2 1 2 2 3 2.500.3-1 .5-2 1.500-3C13 3 16 5 15.800 9A7.800 7.800 0 0 1 .3 9C.2 6 1.500 3.500 3 2l.5 2Q6 3 8 1z" fill="#ff7a25" /><path d="M11 3.500c3 1 4.500 4.500 3 7.500L10 7z" fill="#ffd43b" /><circle cx="7.8" cy="9" r="4" fill="#7d3fd2" /><path d="M2 5q4-1 6 1l-3 2q0 3 4 3.500Q4 15 2.500 10z" fill="#ff4a3d" /></Svg>],
  ['Opera', <Svg><circle cx="8" cy="8" r="8" fill="#e5172b" /><ellipse cx="8" cy="8" rx="3" ry="5.2" fill="#1b1f28" /></Svg>],
  ['Zoom', <Svg><rect width="16" height="16" rx="7" fill="#1663f3" /><text x="8" y="10" fontSize="5" fontWeight="bold" textAnchor="middle" fill="#fff">zoom</text></Svg>],
  ['Process Monitor', <Svg><path d="M0 0h16v16H0z" fill="#f0f0f0" /><path d="m1 8 3-4 3-2M2 11l3-4 4-4 5-1M4 13q1-6 10-8M7 14q0-5 7-6M10 14q0-3 4-4" stroke="#22605f" fill="none" strokeWidth=".8" /><path d="m1 14 4-1M2 5l2 2M8 6l3 2M9 10l2 2" stroke="#222" fill="none" strokeWidth=".8" /><path d="m12 3 2 2M3 10l2 1" stroke="#d14b3b" fill="none" /></Svg>],
  ['Remote Viewer', <Svg><path d="M0 2h16v12H0z" fill="#f3f3f3" /><path d="M0 2h16v2.500H0z" fill="#9aa3ab" /><path d="M4 5.500h5v6H4z" fill="#1170cf" /><path d="M10.500 6.500H14M10.500 8.500H14M10.500 10.500H14" stroke="#888" /></Svg>],
  ['Notepad', <Svg><path d="M2 2h13l-1 14H0z" fill="#a2d9e2" /><path d="M3 1h12v2.500H3z" fill="#e6eef0" /><path d="M4 .5v2M6 .5v2M8 .5v2M10 .5v2M12 .5v2" stroke="#889" /><path d="M4 7h9M4 9.500h9M3 12h9" stroke="#4c9aab" strokeWidth=".5" /><path d="M15 3v12l-1.500 1z" fill="#e0b568" /></Svg>],
  ['Notepad++', <Svg><path d="M1 1h12v15H1z" fill="#f4f4e8" stroke="#777" /><path d="M2 8h10v7H2z" fill="#a6d13f" /><path d="M3 4h8M3 6h7" stroke="#999" /><path d="m6 11 8-10 2 1.500-8 9z" fill="#e8a12e" /><path d="m14 1 2 1.500" stroke="#d12" strokeWidth="2" /></Svg>],
  ['Word', <Svg><path d="M4 0h12v16H4z" fill="#2b7cd3" /><path d="M4 0h12v5H4z" fill="#41a5ee" /><path d="M4 11h12v5H4z" fill="#103f91" /><path d="M0 3.500h10v9H0z" fill="#185abd" /><text x="5" y="11" fontSize="8" fontWeight="bold" textAnchor="middle" fill="#fff">W</text></Svg>],
  ['Excel', <Svg><path d="M4 0h12v16H4z" fill="#21a366" /><path d="M10 0h6v5h-6z" fill="#33c481" /><path d="M4 8h12v8H4z" fill="#107c41" /><path d="M0 3.500h10v9H0z" fill="#0e6d39" /><text x="5" y="11" fontSize="8" fontWeight="bold" textAnchor="middle" fill="#fff">X</text></Svg>],
  ['VS Code', <Svg><path fillRule="evenodd" d="m11.500 0 4.500 2v12l-4.500 2-6-6-3.700 3L0 12l3.500-4L0 4l1.800-1 3.700 3zm.5 4.500L7.500 8l4.500 3.500z" fill="#2396e3" /></Svg>],
  ['Camera Monitor', <Svg><circle cx="6" cy="5.5" r="5" fill="#3c3c3c" stroke="#777" /><path d="M4 4.500Q6 2.500 8 4.500M3 12q1 3 3 2" stroke="#bbb" fill="none" /><path d="M6 8.500h9.500V15H6z" fill="#24310f" stroke="#eee" /><path d="M7 14v-2l1.500-2 1.500 1.500L12 9.500l2 2.500v2z" fill="#9ac52a" /></Svg>],
  ['Steam Recorder', <Svg><rect x="1" y="3" width="12" height="13" rx="3" fill="#fff" /><circle cx="10" cy="6" r="5" fill="#2c3533" stroke="#cfd6d6" strokeWidth="1.5" /><path d="M10 2q3 1 3 4M7 5q2-2 5-1M8 9q3 0 4-2" stroke="#8fa8a2" fill="none" /><path d="M4 7q-1 5 4 6.500" stroke="#222" strokeWidth="1.5" fill="none" /></Svg>],
  ['Color Tool', <Svg><path d="m1 7 7-5 7 5-7 7z" fill="#1b2a23" /><circle cx="5" cy="6" r="2.2" fill="#b64a2a" /><circle cx="9" cy="9.500" r="2.4" fill="#2f7d42" /><circle cx="9" cy="4.500" r="1.8" fill="#246b5e" /><path d="m11 5 4 1.500-3 3z" fill="#c8a27c" /></Svg>],
  ['Bridge', <Badge className="bg-[#04081a] text-white">Br</Badge>],
  ['Bridge Beta', <Badge className="bg-[#dfeafc] text-[#2f7bf0]">Br</Badge>],
  ['Bridge 2023', <Badge className="bg-[#04081a] text-white">Br</Badge>],
  ['Photoshop', <Badge className="bg-[#001e36] text-[#31a8ff]">Ps</Badge>, 'active'],
  ['Affinity Photo', <Svg><path d="M0 0h16v16H0z" fill="#d97bf5" /><path d="M0 0h9L0 14z" fill="#7f4fc4" /><path d="m9 0 6 10H5L9 3M5 3l7 13M4 10l-4 6" stroke="#5e2b94" fill="none" /></Svg>],
  ['Affinity Designer', <Svg><path d="M0 0h16v16H0z" fill="#46c4f5" /><path d="M0 0h9L0 14z" fill="#1b7bbf" /><path d="M9 0 2 11l3 5M5 10h11M4 7l5 9" stroke="#12609c" fill="none" /></Svg>],
  ['Affinity Publisher', <Svg><path d="M0 0h16v16H0z" fill="#f79556" /><path d="M0 0h8L0 14z" fill="#b8324c" /><path d="m7 0 9 14M6 3l8 13M5 6l6 10M3.500 9 8 16" stroke="#a3402a" fill="none" /></Svg>],
  ['Capture', <Svg><circle cx="9" cy="7.5" r="5.8" fill="#f4d8e8" /><path d="M9 2v11M3.500 7.500h11M5 3.500l8 8M13 3.500l-8 8" stroke="#9a3568" strokeWidth="1.2" /><path d="m0 8 5-3v5z" fill="#2c9c3f" /></Svg>],
  ['Lightroom', <Badge className="bg-[#001e36] text-[#4bb0f5]">Lr</Badge>],
  ['Pointer Focus', <Svg><circle cx="8" cy="8" r="6" fill="#222" stroke="#f1dc3f" strokeWidth="1.5" /><path d="m5.500 4.500 6 3-2.500.8 2 2.700-1 .8-2-2.800L6.500 11z" fill="#fff" /></Svg>],
  ['OBS', <Svg><circle cx="8" cy="8" r="7" fill="#26272b" stroke="#999" strokeWidth="1.2" /><path d="M8 8Q4 7 5 3.500M8 8q3-3 5.500-.5M8 8q1.500 4-2 5" stroke="#aaa" strokeWidth="1.4" fill="none" /></Svg>],
  ['CapCut', <Svg><rect x="1" y="1" width="14" height="14" rx="3" fill="#fff" /><path d="M12.500 5.500V4.500h-9V7l9 3.500v1h-9V9l9-3.500" fill="none" stroke="#111" strokeWidth="1.6" /></Svg>],
  ['Filmora', <Svg><path d="M0 0h16v15H0z" fill="#145c70" /><path d="M4.500 0v15" stroke="#0b2a36" /><path d="M0 15.500h16" stroke="#000" /></Svg>],
  ['Presenter', <Svg><defs><linearGradient id="presenter"><stop stopColor="#ef1f74" /><stop offset="1" stopColor="#f2641c" /></linearGradient></defs><rect width="16" height="16" rx="3" fill="url(#presenter)" /><path d="M5 4v8l7-4zM5 8h4" stroke="#fff" strokeWidth="1.4" fill="none" /></Svg>],
  ['Premiere Pro', <Badge className="bg-[#00005b] text-[#a8a8ff]">Pr</Badge>],
  ['After Effects', <Badge className="bg-[#00005b] text-[#a8a8ff]">Ae</Badge>],
  ['Media Encoder', <Badge className="bg-[#00005b] text-[#a8a8ff]">Me</Badge>],
  ['InDesign', <Badge className="bg-[#49021f] text-[#ff3366]">Id</Badge>],
]

const pinnedSecond: App[] = [
  ['Illustrator', <Badge className="bg-[#330000] text-[#ff9a00]">Ai</Badge>],
  ['Audacity', <Svg><path d="M1 14V9a7 7 0 0 1 14 0v5" fill="none" stroke="#0a14b8" strokeWidth="2.5" /><circle cx="8" cy="10.5" r="4.3" fill="#f28c1c" /><path d="M4 10h8v2H4z" fill="#d3341f" /></Svg>],
  ['Acrobat', <Svg><rect width="16" height="16" rx="2.5" fill="#b30b00" /><path d="M8 3q-1.300 0 .2 4T13 11.500q-1.500-1.500-5-.7T3 13q1.500 0 3.800-4.500T8 3z" fill="none" stroke="#fff" strokeWidth="1.2" /></Svg>],
  ['Hexagon', <Svg><path d="m8 1 6 3.500v7L8 15l-6-3.500v-7z" fill="#1fb59d" /><path d="m8 1 6 3.500L8 8 2 4.500z" fill="#65e0cc" /><path d="m8 8 6-3.500v7L8 15z" fill="#178f8b" /></Svg>],
  ['Camera', <Svg><path d="M0 0h16v16H0z" fill="#4a8cab" /><circle cx="8" cy="8" r="6.5" fill="#2c3e4a" /><circle cx="8" cy="8" r="1.8" fill="#0d1a22" /></Svg>],
  ['SumatraPDF', <Svg><path d="M15 3A8 8 0 1 0 15 13l-4-5z" fill="#b5101c" /><path d="M9 3Q3 4 6 7.500T4 13" stroke="#fff" strokeWidth="1.5" fill="none" /></Svg>],
  ['Photo Wheel', <Svg><path d="M8 8 6 1h4z" fill="#e8402d" /><path d="m8 8 2-7 4 3z" fill="#f29a1f" /><path d="m8 8 7-3v4z" fill="#f1dd38" /><path d="m8 8 7 2-3 4z" fill="#39a845" /><path d="m8 8 3 7H7z" fill="#2f8bd8" /><path d="m8 8-3 6-3-3z" fill="#4a50cc" /><path d="M8 8 1 9l1-4z" fill="#b245b8" /><path d="M8 8 3 4l2-2z" fill="#e04580" /><circle cx="8" cy="8" r="1.5" fill="#fff" /></Svg>],
  ['TikTok', <Svg><circle cx="8" cy="8" r="8" fill="#000" /><path d="M9 3v7.500a2 2 0 1 1-2-2M9 3.500q.5 2.500 3 2.700" fill="none" stroke="#fff" strokeWidth="1.5" /></Svg>],
]

const tray: ReactNode[] = [
  <><rect x="1" y="1" width="14" height="14" rx="5" fill="#e9e9e9" /></>,
  <><path d="M1.500 1h13v14h-13z" fill="#e8e4da" /><path d="M3 3h10v10H3z" fill="#333" /><path d="M3 3h3v5H3z" fill="#e3352c" /><path d="M6 3h3v5H6z" fill="#f2b21c" /><path d="M9 3h4v5H9z" fill="#2f9a4c" /><path d="M4 10h1.500v2H4zM7 10h1.500v2H7zM10 10h1.500v2H10z" fill="#ddd" /></>,
  <><path d="M1 2h12v9H1z" fill="#1ba5ee" /><path d="M4 3h12v8H4z" fill="#0c75cf" /><path d="M5 13h7v1.500H5z" fill="#1ba5ee" /></>,
  <><path d="M1 2h14v8H1z" fill="#9fb4ba" /><path d="M2 3h12v6H2z" fill="#2c8b8f" /><circle cx="8" cy="6" r="2" fill="#d8f2f0" /><path d="M7 10h2v3h3v1.500H4V13h3z" fill="#777" /></>,
  <><path d="M4 13a3.500 3.500 0 0 1 0-7 4.500 4.500 0 0 1 8.500 1A3 3 0 0 1 13 13z" fill="#e5e7ea" /><path d="m2 7 5-3 7 5-3 1z" fill="#a9afb6" /></>,
  <path d="M3.500 5h6v6h-6zM10 8l3-2.500v5zM3 2.500Q8-.5 12 2.500M3 13.500q5 3 9 0" fill="none" stroke="#fff" strokeWidth="1.3" />,
  <><path d="M1 4h3l2-2h5l1 2h2v8H1z" fill="#6f6862" /><circle cx="8" cy="7.5" r="3.5" fill="#2e2c2b" stroke="#bbb" /><path d="M7.500 9H15v6H7.500z" fill="#2f78c9" stroke="#dde" /></>,
  <><g fill="none" stroke="#fff" strokeWidth="1.3"><circle cx="8" cy="4" r="3" /><circle cx="4" cy="9.5" r="3" /><circle cx="11" cy="11" r="4" /><path d="m9 11 1.500 1.500L13 9.500" /></g></>,
  <><path d="M1 1h9l5 5v9H5L1 11z" fill="#14b5cf" /><path d="M3 7h6V4l5 4-5 4V9.500H3z" fill="#fff" /></>,
  <path d="M6 11H5a3 3 0 0 1 0-6q2 0 3.500 3T12 11a3 3 0 0 0 0-6q-2 0-3.500 3T5 9" fill="none" stroke="#fff" strokeWidth="1.5" />,
  <><circle cx="8" cy="8" r="8" fill="#eca33a" /><path d="M4.500 11Q4 5 11.500 4q.5 7-4.500 7-1 0-2.500 1z" fill="#fff" /></>,
  <><path d="M6 1h9v7H6z" fill="#9bb2cf" /><path d="M7 2h7v5H7z" fill="#26407a" /><path d="M1 5h9v7H1z" fill="#b9cce5" /><path d="M2 6h7v5H2z" fill="#4990e0" /><path d="M4 12h3v2H4z" fill="#999" /></>,
  <><path d="M1 1h14v10H1z" fill="#85888c" /><path d="M1 13h4v2H1zM7 13h4v2H7z" fill="#b0b2b5" /></>,
  <><path d="M8 0q3 2 7 2 0 9-7 13Q1 11 1 2q4 0 7-2z" fill="#fff" /><path d="M8 1v13M1.500 7h13" stroke="#1b1f28" /><circle cx="11.5" cy="11.5" r="4" fill="#138a3e" /><path d="m9.500 11.500 1.500 1.500 2.500-3" stroke="#fff" fill="none" /></>,
  <><rect x="2" width="12" height="16" rx="6" fill="#0078d7" /><path d="m5 5 6 6-3 2.500v-11L11 5l-6 6" stroke="#fff" fill="none" /></>,
  <><path d="M2 3v2M5 3v2M1 5.500h5v2Q6 9 3.500 9T1 7.500zM3.500 9v3H6" stroke="#ddd" fill="none" /><path d="M8 5h7v7H6.500M9 7l4 3.500M13 7l-4 3.500" stroke="#ddd" fill="none" /></>,
  <path d="M4 3.500h11.500V11H4M1 1.500h4v4H1zM3 5.500v7M9 11v3M5.500 14h8" fill="none" stroke="#fff" strokeWidth="1.2" />,
  <><path d="M1 6h2.500L7 2.500v11L3.500 10H1z" fill="none" stroke="#fff" strokeWidth="1.2" /><path d="M9 5.500q2 2.500 0 5" fill="none" stroke="#fff" /><path d="M11 3.500q3.500 4.500 0 9M13.500 2q4 6 0 12" fill="none" stroke="#777c85" /></>,
]

function TaskRow({ apps }: { apps: App[] }) {
  return (
    <div className="flex h-[31px]">
      {apps.map(([name, icon, state]) => (
        <button
          key={name}
          aria-label={name}
          className={`flex w-[37px] shrink-0 flex-col items-center pt-2 ${state === 'active' ? 'bg-[#37414c]' : ''}`}
        >
          {icon}
          {state && <span className={`mt-auto h-0.5 bg-[#9db0c8] ${state === 'active' ? 'w-full' : 'w-7'}`} />}
        </button>
      ))}
    </div>
  )
}

function Taskbar() {
  return (
    <footer className="flex h-[62px] shrink-0 items-center bg-[#1b1f28] text-white">
      <div className="flex items-center gap-5 pl-2.5">
        <button aria-label="Start"><Svg><path d="m0 2 7-1v6.500H0zM8 .9 16 0v7.500H8zM0 8.500h7V15l-7-1zM8 8.500h8V16l-8-.9z" /></Svg></button>
        <button aria-label="Search Windows"><Svg><path d="M6 10 .5 15.500" stroke="currentColor" strokeWidth="1.3" /><circle cx="10" cy="6" r="5" fill="none" stroke="currentColor" strokeWidth="1.3" /></Svg></button>
        <button aria-label="Task View"><Svg><path d="M1 0v3h10V0M1 5.500h10v5H1zM1 16v-3h10v3M14.500 0v3M14.500 8v8" {...line} /><path d="M13 4h3v3h-3z" /></Svg></button>
      </div>
      <div className="ml-3 self-stretch">
        <TaskRow apps={pinned} />
        <TaskRow apps={pinnedSecond} />
      </div>
      <div className="ml-auto grid grid-cols-9 gap-x-2 gap-y-[13px]">
        {tray.map((icon, i) => <Svg key={i}>{icon}</Svg>)}
      </div>
      <span className="ml-2.5 w-6 text-[11px]">ENG</span>
      <div className="ml-2 w-[70px] text-center text-[11px] leading-[19px]">
        <div>11:26:12</div>
        <div>vasárnap</div>
        <div>2023. 02. 26.</div>
      </div>
      <button aria-label="Notifications" className="ml-[15px] mr-5"><Svg><path d="M.6 1.500h14.800v11h-5L8 15l-2.400-2.500h-5z" {...line} /></Svg></button>
      <div className="mr-1 h-full w-px bg-[#5b5f67]" />
    </footer>
  )
}

export default function App() {
  return (
    <div className="flex min-h-screen flex-col overflow-hidden bg-[#262626] font-['Open_Sans','Noto_Sans',sans-serif] text-[#dedede]">
      <MenuBar />
      <OptionsBar />
      <div className="flex flex-1">
        <Toolbar />
        <div className="w-[3px] border-r border-[#1d1d1d]" />
        <DocumentArea />
        <div className="w-[3px] border-x border-[#1d1d1d]" />
        <IconDock />
        <SidePanels />
        <PluginDock />
      </div>
      <Taskbar />
    </div>
  )
}
